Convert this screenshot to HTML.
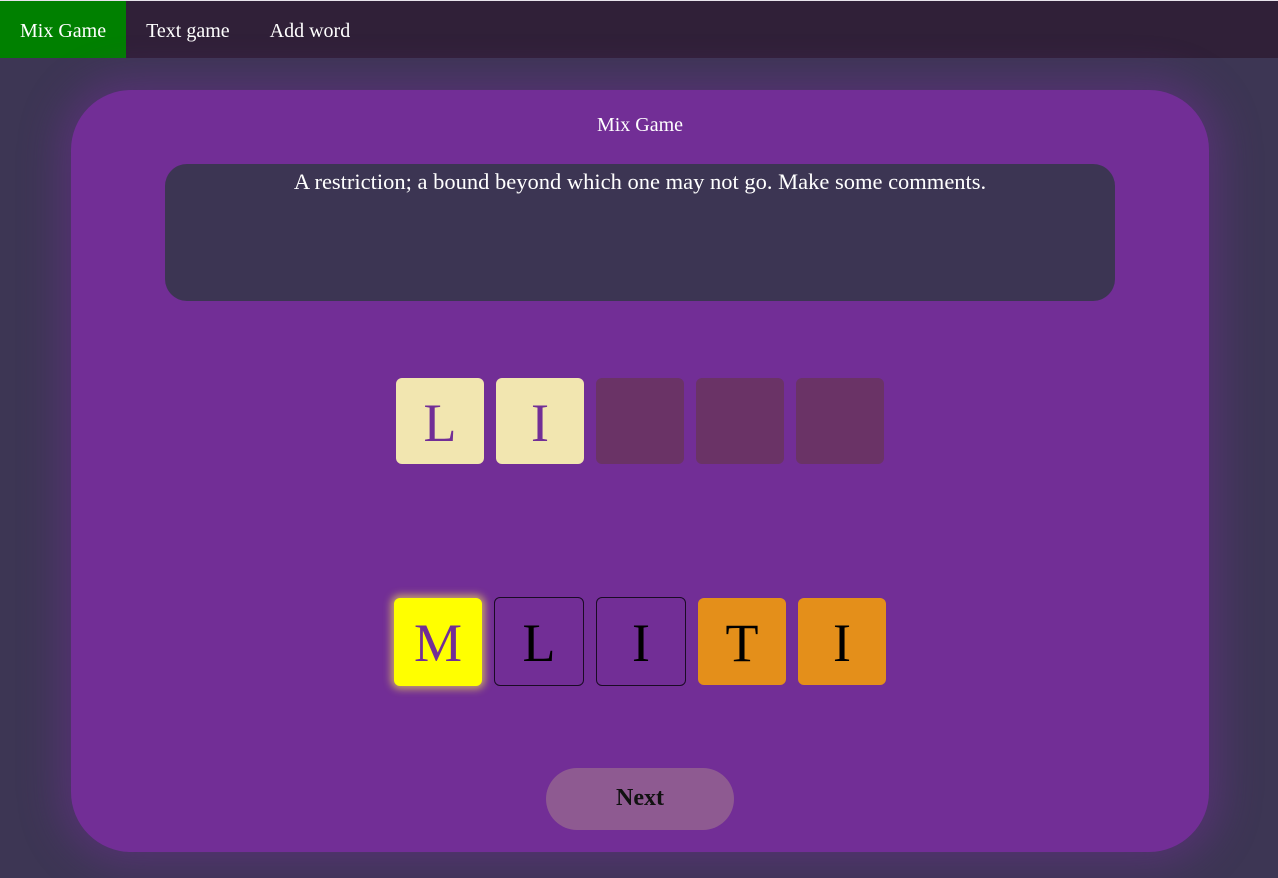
<!DOCTYPE html>
<html><head><style>
*{margin:0;padding:0;box-sizing:border-box}
body{width:1278px;height:878px;background:#3d3654;font-family:"Liberation Serif",serif;position:relative;overflow:hidden}
.top{position:absolute;left:0;top:0;width:1278px;height:1px;background:#e8e4ec}
nav{position:absolute;left:0;top:1px;width:1278px;height:57px;background:#302038;display:flex}
nav a{color:#fff;font-size:20px;line-height:60px;padding:0 20px;text-decoration:none}
nav a.on{background:#008000}
.card{position:absolute;left:71px;top:90px;width:1138px;height:762px;background:#722e96;border-radius:60px;box-shadow:0 0 40px 12px rgba(114,46,150,.45)}
.title{position:absolute;top:24px;width:100%;text-align:center;color:#fff;font-size:20px}
.box{position:absolute;left:94px;top:74px;width:950px;height:137px;background:#3c3553;border-radius:22px;color:#fff;font-size:22.5px;text-align:center;padding-top:5px}
.t{position:absolute;width:88px;height:86px;border-radius:6px;font-size:54px;text-align:center;line-height:90px}
.btn{position:absolute;left:475px;top:678px;width:188px;height:62px;border-radius:31px;background:#8e5a91;font-weight:bold;font-size:24px;text-align:center;line-height:60px;color:#111}
</style></head><body>
<div class="top"></div>
<nav><a class="on">Mix Game</a><a>Text game</a><a>Add word</a></nav>
<div class="card">
<div class="title">Mix Game</div>
<div class="box">A restriction; a bound beyond which one may not go. Make some comments.</div>
<div class="t" style="left:325px;top:288px;background:#f2e6b0;color:#722e96">L</div>
<div class="t" style="left:425px;top:288px;background:#f2e6b0;color:#722e96">I</div>
<div class="t" style="left:525px;top:288px;background:#6a3366"></div>
<div class="t" style="left:625px;top:288px;background:#6a3366"></div>
<div class="t" style="left:725px;top:288px;background:#6a3366"></div>
<div class="t" style="left:323px;top:508px;height:88px;background:#ffff00;color:#722e96;box-shadow:0 0 8px 3px rgba(255,240,80,.6)">M</div>
<div class="t" style="left:423px;top:507px;width:90px;height:89px;border:1px solid #1a0b25;color:#000">L</div>
<div class="t" style="left:525px;top:507px;width:90px;height:89px;border:1px solid #1a0b25;color:#000">I</div>
<div class="t" style="left:627px;top:508px;height:87px;background:#e48f1a;color:#000">T</div>
<div class="t" style="left:727px;top:508px;height:87px;background:#e48f1a;color:#000">I</div>
<div class="btn">Next</div>
</div>
</body></html>
